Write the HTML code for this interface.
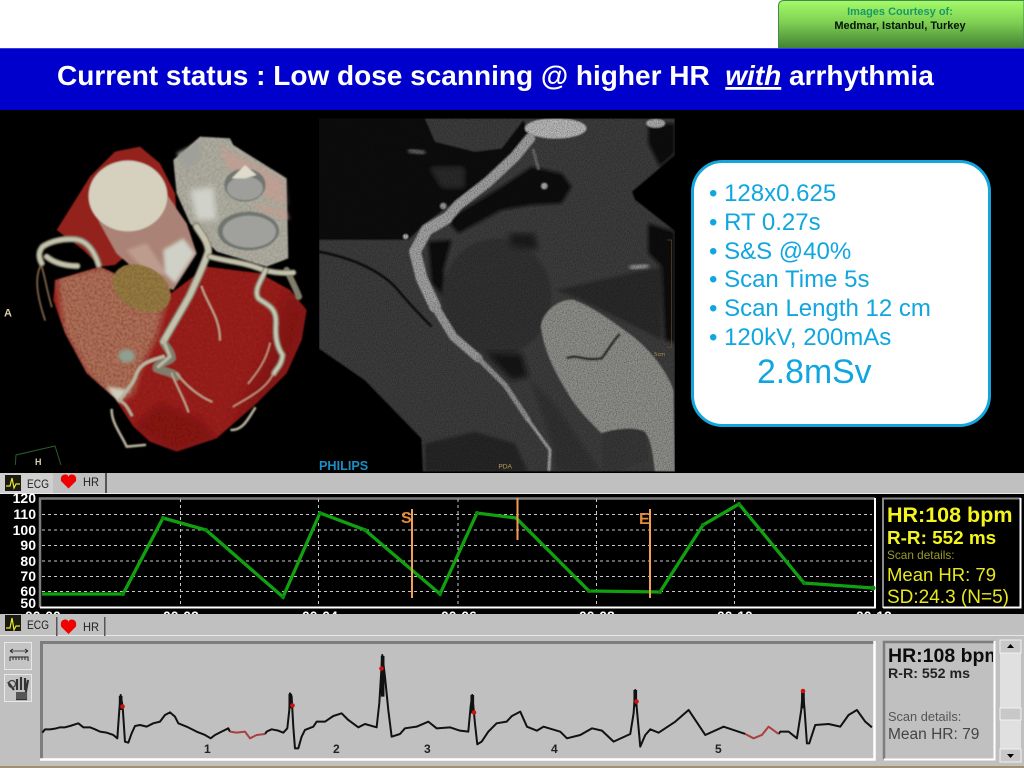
<!DOCTYPE html>
<html><head><meta charset="utf-8"><title>Low dose scanning</title>
<style>
html,body{margin:0;padding:0;background:#fff;overflow:hidden}
svg{display:block}
text{font-family:"Liberation Sans",sans-serif}
</style></head><body>
<svg width="1024" height="768" viewBox="0 0 1024 768" xmlns="http://www.w3.org/2000/svg">
<defs>
<linearGradient id="g" x1="0" y1="0" x2="0" y2="1"><stop offset="0" stop-color="#a4fb68"/><stop offset=".45" stop-color="#7fd052"/><stop offset="1" stop-color="#3f7f33"/></linearGradient>
<filter id="soft" x="-3%" y="-3%" width="106%" height="106%"><feGaussianBlur stdDeviation="2.4"/></filter>
<filter id="b1" x="-10%" y="-10%" width="120%" height="120%"><feGaussianBlur stdDeviation="5"/></filter>
<filter id="b2" x="-15%" y="-15%" width="130%" height="130%"><feGaussianBlur stdDeviation="9"/></filter>
<filter id="b3" x="-25%" y="-25%" width="150%" height="150%"><feGaussianBlur stdDeviation="18"/></filter>
<filter id="nz" x="0" y="0" width="100%" height="100%"><feTurbulence type="fractalNoise" baseFrequency=".3" numOctaves="2" seed="3"/><feColorMatrix values="0 0 0 0 0  0 0 0 0 0  0 0 0 0 0  1.5 0 0 0 -.6"/><feComposite in2="SourceGraphic" operator="in"/></filter>
<filter id="nz2" x="0" y="0" width="100%" height="100%"><feTurbulence type="fractalNoise" baseFrequency=".2" numOctaves="2" seed="8"/><feColorMatrix values="0 0 0 0 .1  0 0 0 0 0  0 0 0 0 0  2 0 0 0 -.85"/><feComposite in2="SourceGraphic" operator="in"/></filter>
<clipPath id="ctc"><rect x="12" y="25" width="1068" height="1060"/></clipPath>
<clipPath id="hp"><rect x="883" y="641" width="110" height="118"/></clipPath>
<clipPath id="hb"><path id="hbp" d="M165,510L300,470L500,560L620,470L780,490L870,540L920,600L905,690L860,790L770,880L650,985L530,1025L450,995L400,950L345,865L260,790L195,670L160,570Z"/></clipPath>
</defs>

<rect width="1024" height="768" fill="#000"/>
<rect width="1024" height="49" fill="#fff"/>
<!-- courtesy box -->
<path d="M778.5,49V6Q778.5,.5 784,.5H1024V49Z" fill="url(#g)" stroke="#3f8a4c"/>
<text x="900" y="15" font-size="11" font-weight="bold" fill="#169a68" text-anchor="middle">Images Courtesy of:</text>
<text x="900" y="29" font-size="11" font-weight="bold" fill="#04140a" text-anchor="middle">Medmar, Istanbul, Turkey</text>
<!-- title -->
<rect y="49" width="1024" height="61" fill="#0000cc"/>
<rect y="48" width="1024" height="1" fill="#3a3ae0"/>
<text x="57" y="85" font-size="28" font-weight="bold" fill="#fff" xml:space="preserve">Current status : Low dose scanning @ higher HR  <tspan font-style="italic" text-decoration="underline">with</tspan> arrhythmia</text>

<!-- 3D heart -->
<g transform="translate(0,110) scale(.3333)">
<g filter="url(#soft)">
 <path d="M170,360L270,200L345,125L420,110L480,160L525,250L530,310L345,465L300,470L250,420Z" fill="#94201a"/>
 <use href="#hbp" fill="#9c201c"/>
 <g clip-path="url(#hb)">
  <rect x="150" y="460" width="780" height="580" fill="#000" filter="url(#nz2)" opacity=".6"/>
  <path d="M170,500L310,470L500,570L470,680L420,780L400,850L350,880L260,790L190,660Z" fill="#ba8f70" filter="url(#b2)" opacity=".8"/>
  <path d="M170,500L310,470L500,570L470,680L420,780L400,850L350,880L260,790L190,660Z" fill="#6a2012" filter="url(#nz2)" opacity=".9"/>
  <path d="M320,830L390,840L350,880Z" fill="#cfcdbc" filter="url(#b1)"/>
  <path d="M860,540L930,600L900,720L800,880L700,960L820,700Z" fill="#74110f" filter="url(#b3)" opacity=".6"/>
  <path d="M400,950L520,1030L650,985L600,930L480,880Z" fill="#74110f" filter="url(#b2)" opacity=".6"/>
 </g>
 <ellipse cx="380" cy="738" rx="25" ry="20" fill="#8fa090" filter="url(#b1)"/>
 <!-- aorta body -->
 <path d="M268,265L300,340L350,430L440,510L520,540L590,430L560,340L498,250Z" fill="#ab8376"/>
 <path d="M380,420L450,500L500,490L440,400Z" fill="#bd9c8e" filter="url(#b1)"/>
 <path d="M490,420L550,385L585,430L525,520L495,490Z" fill="#cfd0c6" filter="url(#b1)"/>
 <ellipse cx="384" cy="258" rx="118" ry="106" fill="#d6d1bf"/>
 <!-- gold patch -->
 <ellipse cx="425" cy="535" rx="92" ry="66" transform="rotate(28 425 535)" fill="#a98848"/>
 <ellipse cx="425" cy="535" rx="92" ry="66" transform="rotate(28 425 535)" fill="#3a280f" filter="url(#nz)"/>
 <!-- atrium -->
 <path d="M520,150L600,80L690,85L700,105L860,205L865,445L800,470L650,425L570,340L530,250Z" fill="#bcbaac"/>
 <path d="M520,150L600,80L690,85L700,105L860,205L865,445L800,470L650,425L570,340L530,250Z" fill="#5a5a50" filter="url(#nz)" opacity=".7"/>
 <path d="M660,110L850,210L860,290L780,250L680,170Z" fill="#c89c90" filter="url(#b2)" opacity=".7"/>
 <path d="M750,280L860,300L870,330L800,310Z" fill="#c89c90" filter="url(#b1)" opacity=".6"/>
 <path d="M530,130L600,95L605,140L560,180Z" fill="#a0a09a" filter="url(#b1)"/>
 <path d="M570,240L640,230L650,330L590,330Z" fill="#d0d2ca" filter="url(#b2)"/>
 <ellipse cx="735" cy="225" rx="62" ry="50" fill="#6f7470"/>
 <ellipse cx="735" cy="235" rx="54" ry="36" fill="#9e9e9a"/>
 <path d="M695,205L735,165L770,195L735,205Z" fill="#dedbcb"/>
 <ellipse cx="745" cy="363" rx="92" ry="58" fill="#6f746e"/>
 <ellipse cx="748" cy="365" rx="80" ry="48" fill="#a0a09c"/>
 <!-- vessels -->
 <g fill="none" stroke-linecap="round" stroke-linejoin="round">
  <path d="M296,465C285,430 265,392 225,388C185,385 150,395 128,410C115,425 115,440 125,460M232,468C205,468 165,462 140,440" stroke="#807d6c" stroke-width="20"/>
  <path d="M296,465C285,430 265,392 225,388C185,385 150,395 128,410C115,425 115,440 125,460M232,468C205,468 165,462 140,440" stroke="#c4c3ac" stroke-width="11"/>
  <path d="M120,470C108,500 105,540 135,630M125,470C135,500 140,540 155,590" stroke="#8a6a50" stroke-width="5"/>
  <path d="M590,350C605,375 625,395 625,425C610,470 590,510 570,555C540,610 515,650 490,695C500,715 515,725 515,745C495,760 470,760 470,775C490,785 515,785 530,800" stroke="#807d6c" stroke-width="24"/>
  <path d="M590,350C605,375 625,395 625,425C610,470 590,510 570,555C540,610 515,650 490,695" stroke="#c4c2ac" stroke-width="16"/>
  <path d="M490,690L510,740L475,770M490,740C460,750 425,755 410,790C400,825 385,830 360,870" stroke="#b8b6a0" stroke-width="10"/>
  <path d="M515,790C530,830 550,860 565,905M530,790C560,830 600,860 635,875M605,530C620,580 660,620 660,690" stroke="#c4ab94" stroke-width="5"/>
  <path d="M630,440C680,455 730,455 790,480C830,490 860,490 880,488M860,480C875,510 885,530 897,560" stroke="#807d6c" stroke-width="19"/>
  <path d="M630,440C680,455 730,455 790,480C830,490 860,490 880,488" stroke="#c4c2ac" stroke-width="11"/>
  <path d="M797,480C785,510 760,540 775,565C800,585 830,590 828,640C825,680 830,710 848,735C845,765 830,775 822,790" stroke="#807d6c" stroke-width="18"/>
  <path d="M797,480C785,510 760,540 775,565C800,585 830,590 828,640C825,680 830,710 848,735C845,765 830,775 822,790" stroke="#c8c6b0" stroke-width="10"/>
  <path d="M820,790C800,840 730,870 700,890M810,700C800,750 770,790 745,820" stroke="#c8a088" stroke-width="4"/>
  <path d="M335,900C335,940 365,975 380,1010L435,1005M765,895C745,925 730,960 695,960M355,870C380,880 385,900 395,915" stroke="#b5af9a" stroke-width="8"/>
 </g>
</g>
 <text x="12" y="620" font-size="33" font-weight="bold" fill="#d8cfb0">A</text>
 <path d="M46,1065L48,1035L165,1008L183,1065" fill="none" stroke="#2d5a2d" stroke-width="3"/>
 <text x="105" y="1065" font-size="27" font-weight="bold" fill="#d8cfb0">H</text>
</g>

<!-- CT -->
<g transform="translate(315,110) scale(.3333)" clip-path="url(#ctc)">
 <g filter="url(#soft)">
 <rect x="12" y="25" width="1068" height="1060" fill="#3e3e3e"/>
 <path d="M12,25H330L360,95L480,125L560,115L625,30L650,90L560,170L480,230L400,290L330,340L280,390L12,390Z" fill="#0c0c0c"/>
 <path d="M560,230L650,170L740,190L770,230L740,280L650,285L560,300L430,370L395,330Z" fill="#101010" filter="url(#b1)"/>
 <path d="M340,395L410,390L385,480L395,570L350,520Z" fill="#0e0e0e" filter="url(#b1)"/>
 <path d="M340,170H450V235L380,235Z" fill="#2c2c2c" filter="url(#b2)"/>
 <path d="M12,425C90,440 180,470 240,530C290,590 320,620 350,650" stroke="#0e0e0e" stroke-width="9" fill="none"/>
 <ellipse cx="545" cy="560" rx="165" ry="175" fill="#303030" filter="url(#b1)"/>
 <path d="M580,370L660,370L670,420L590,410Z" fill="#1a1a1a" filter="url(#b2)"/>
 <path d="M510,730L620,730L640,800L590,810Z" fill="#161616" filter="url(#b2)"/>
 <path d="M720,540L940,490L1040,470L1040,690L900,620L800,570Z" fill="#292929" filter="url(#b1)"/>
 <path d="M1000,340L1080,365V700L1050,690L1040,470L1000,430Z" fill="#101010" filter="url(#b1)"/>
 <path d="M1000,40H1080V130L1035,170L1000,100Z" fill="#0b0b0b" filter="url(#b1)"/>
 <path d="M640,800L720,880L860,1085H720L710,1000Z" fill="#333" filter="url(#b2)"/>
 <!-- ventricle -->
 <path d="M678,650C680,610 730,565 775,570C830,590 880,625 940,670C990,705 1050,770 1075,840L1080,1085H1020C1015,1040 1010,990 990,965C960,950 900,955 860,970C820,930 790,900 765,860C735,810 690,740 678,650Z" fill="#8e8e8a"/>
 <path d="M860,970C900,955 960,950 990,965L1002,1050L905,1085H862Z" fill="#383838"/>
 <path d="M755,745C790,730 800,755 860,745C880,720 895,690 915,672" stroke="#2b2b2b" stroke-width="8" fill="none"/>
 <!-- black cuts -->
 <path d="M1085,130L950,245L960,270L1085,368Z" fill="#000"/>
 <path d="M5,710L150,810L320,985L325,1090H5Z" fill="#000"/>
 <path d="M330,1000L480,965L600,1000L640,1085H330Z" fill="#272727" filter="url(#b1)"/>
 <!-- aorta + vessel -->
 <ellipse cx="722" cy="55" rx="92" ry="30" fill="#b8b8b8"/>
 <ellipse cx="1022" cy="40" rx="28" ry="13" fill="#aaa"/>
 <g fill="none" stroke-linecap="round" stroke-linejoin="round">
  <path d="M645,85L600,140L520,215L430,285L395,325" stroke="#a0a0a0" stroke-width="30"/>
  <path d="M395,325L335,360L300,425L320,505L360,590" stroke="#a2a2a2" stroke-width="34"/>
  <path d="M360,590L415,680L490,745" stroke="#9c9c9c" stroke-width="24"/>
  <path d="M490,745L570,825L640,930" stroke="#909090" stroke-width="14"/>
  <path d="M640,930L705,1020L702,1080" stroke="#a0a0a0" stroke-width="8"/>
  <path d="M655,120L670,175" stroke="#6a6a6a" stroke-width="8"/>
 </g>
 <circle cx="688" cy="228" r="9" fill="#aaa"/><circle cx="272" cy="380" r="7" fill="#bbb"/><circle cx="385" cy="288" r="9" fill="#999"/>
 <path d="M280,120L330,130" stroke="#777" stroke-width="12" filter="url(#b1)"/>
 <path d="M945,475L1000,465" stroke="#999" stroke-width="16" filter="url(#b1)"/>
 </g>
 <rect x="12" y="25" width="1068" height="1060" fill="#000" filter="url(#nz)" opacity=".55"/>
 <path d="M1057,390H1070V712H1055" fill="none" stroke="#5f4f2c" stroke-width="2"/>
 <text x="1018" y="738" font-size="17" fill="#a88e50">5cm</text>
 <text x="550" y="1075" font-size="20" fill="#b99f5a">PDA</text>
 <text x="12" y="1080" font-size="38" font-weight="bold" fill="#1c8ec4">PHILIPS</text>
</g>

<!-- info callout -->
<rect x="692.5" y="161.5" width="297" height="264" rx="30" fill="#fff" stroke="#13a5dc" stroke-width="3"/>
<g font-size="24" fill="#10a6df">
<text x="709" y="201">• 128x0.625</text>
<text x="709" y="230">• RT 0.27s</text>
<text x="709" y="259">• S&amp;S @40%</text>
<text x="709" y="287">• Scan Time 5s</text>
<text x="709" y="316">• Scan Length 12 cm</text>
<text x="709" y="345">• 120kV, 200mAs</text>
<text x="757" y="383" font-size="33.8">2.8mSv</text>
</g>

<!-- time labels (clipped by grey below) -->
<g font-size="14" font-weight="bold" fill="#fff">
<text x="25" y="621">00:00</text><text x="163" y="621">00:02</text><text x="302" y="621">00:04</text><text x="441" y="621">00:06</text><text x="579" y="621">00:08</text><text x="717" y="621">00:10</text><text x="856" y="621">00:12</text>
</g>

<!-- upper HR panel -->
<rect y="473" width="1024" height="20" fill="#c0c0c0"/>
<rect y="493" width="1024" height="1" fill="#e8e8e8"/>
<rect x="0" y="473" width="53" height="20" fill="#cfcfcf"/>
<rect x="105" y="473" width="2" height="20" fill="#555"/>
<rect x="5" y="475" width="16" height="16" fill="#1a1a10"/>
<path d="M6,486H10L12,478L14,488L16,484H20" fill="none" stroke="#e8e830" stroke-width="1.2"/>
<text x="27" y="488" font-size="12" fill="#222" textLength="22" lengthAdjust="spacingAndGlyphs">ECG</text>
<path d="M68.500,488.500L61,481Q60,475 65,474.500Q68,474.500 68.500,477Q69,474.500 72,474.500Q77,475 76,481Z" fill="#f00000"/>
<text x="83" y="486" font-size="12" fill="#222" textLength="16" lengthAdjust="spacingAndGlyphs">HR</text>
<rect x="40" y="498" width="835" height="110" fill="#000"/>
<path d="M40,607.500V498.500H875" fill="none" stroke="#7d7d7d" stroke-width="2.500"/>
<path d="M40,607.500H875V498" fill="none" stroke="#fff" stroke-width="2"/>
<g stroke="#c8c8c8" stroke-width="1" stroke-dasharray="3,3" fill="none">
<path d="M42,514.500H872M42,530H872M42,545.500H872M42,561H872M42,576.500H872M42,591.500H872"/>
<path d="M180.500,499V606M318.500,499V606M458,499V606M596.500,499V606M734.500,499V606"/>
</g>
<g font-size="14" font-weight="bold" fill="#fff" text-anchor="end">
<text x="36" y="503">120</text><text x="36" y="519">110</text><text x="36" y="535">100</text><text x="36" y="550">90</text><text x="36" y="566">80</text><text x="36" y="581">70</text><text x="36" y="596">60</text><text x="36" y="608">50</text>
</g>
<path d="M42,594L123,594L163,518L206,530L283,597L320,513L365,530L440,594L477,513L516,518L589,591L660,592L703,525L739,504L804,583L873,588" fill="none" stroke="#10a010" stroke-width="3.300"/>
<g fill="#0b8a0b"><circle cx="123" cy="594" r="2"/><circle cx="163" cy="518" r="2"/><circle cx="206" cy="530" r="2"/><circle cx="283" cy="597" r="2"/><circle cx="320" cy="513" r="2"/><circle cx="365" cy="530" r="2"/><circle cx="440" cy="594" r="2"/><circle cx="477" cy="513" r="2"/><circle cx="589" cy="591" r="2"/><circle cx="660" cy="592" r="2"/><circle cx="703" cy="525" r="2"/><circle cx="739" cy="504" r="2"/><circle cx="804" cy="583" r="2"/><circle cx="873" cy="588" r="2.500"/></g>
<path d="M412,509V598M517.500,498V540M650,509V598" stroke="#f0a050" stroke-width="2"/>
<text x="401" y="523" font-size="16" font-weight="bold" fill="#e08a3a">S</text>
<text x="639" y="524" font-size="16" font-weight="bold" fill="#e08a3a">E</text>
<!-- info -->
<rect x="883" y="498" width="138" height="110" fill="#000"/>
<path d="M883,608V498.500H1021" fill="none" stroke="#8a8a8a" stroke-width="2"/>
<path d="M883,607.500H1020.500V498" fill="none" stroke="#fff" stroke-width="2"/>
<text x="887" y="522" font-size="21.500" font-weight="bold" fill="#f5f51e">HR:108 bpm</text>
<text x="887" y="544" font-size="18.900" font-weight="bold" fill="#f5f51e">R-R: 552 ms</text>
<text x="887" y="559" font-size="11.800" fill="#9a9a28">Scan details:</text>
<text x="887" y="581" font-size="18.500" fill="#e8e81e">Mean HR: 79</text>
<text x="887" y="603" font-size="19" fill="#e8e81e">SD:24.3 (N=5)</text>

<!-- lower ECG panel -->
<rect y="614" width="1024" height="154" fill="#c0c0c0"/>
<rect y="635" width="1024" height="1" fill="#e8e8e8"/>
<rect x="56" y="617" width="1.500" height="19" fill="#555"/>
<rect x="104" y="617" width="1.500" height="19" fill="#555"/>
<rect x="5" y="615" width="16" height="16" fill="#1a1a10"/>
<path d="M6,628H10L12,618L14,630L16,626H20" fill="none" stroke="#e8e830" stroke-width="1.200"/>
<text x="27" y="629" font-size="12" fill="#222" textLength="22" lengthAdjust="spacingAndGlyphs">ECG</text>
<path d="M68.500,634L61,626.500Q60,620 65,619.500Q68,619.500 68.500,622Q69,619.500 72,619.500Q77,620 76,626.500Z" fill="#f00000"/>
<text x="83" y="631" font-size="12" fill="#222" textLength="16" lengthAdjust="spacingAndGlyphs">HR</text>
<!-- tool buttons -->
<g>
<rect x="4.500" y="642.500" width="27" height="27" fill="#c4c4c4" stroke="#e8e8e8"/>
<path d="M10,651H28M10,651l3,-2M10,651l3,2M28,651l-3,-2M28,651l-3,2" stroke="#222" stroke-width=".8" fill="none"/>
<path d="M10,661V657H28V661M13,657V660M16,657V660M19,657V660M22,657V660M25,657V660" stroke="#222" stroke-width="1" fill="none"/>
<rect x="4.500" y="674.500" width="27" height="27" fill="#c4c4c4" stroke="#e8e8e8"/>
<path d="M16,699H26V691L28,680M21,690V677M17,690V679M25,690V678M14,690L8,682" stroke="#333" stroke-width="2.200" fill="none"/>
<rect x="16" y="692" width="11" height="7" fill="#555"/>
<circle cx="12" cy="684" r="3.500" fill="none" stroke="#444" stroke-width="1.200"/>
</g>
<!-- chart -->
<path d="M41.500,759V642.500H875" fill="none" stroke="#7d7d7d" stroke-width="3"/>
<path d="M40,759.500H874.500V641" fill="none" stroke="#fff" stroke-width="2.500"/>
<g transform="translate(0,610) scale(.3333)" fill="none" stroke-linejoin="round">
<path stroke="#111" stroke-width="6" d="M127,368L135,358L150,358L165,356L180,352L195,352L210,348L235,340L250,352L270,352L285,358L300,365L320,368L340,375L352,385L358,300L362,255L368,290L375,395L385,398L395,370L405,348L420,345L440,350L460,340L480,335L495,315L510,307L525,320L535,340L560,350L590,365L615,375L632,385L645,375L665,365L685,355L690,365"/>
<path stroke="#111" stroke-width="6" d="M795,372L800,365L815,358L835,362L850,368L862,355L868,300L870,250L875,260L880,350L885,415L895,415L905,380L915,360L940,350L950,335L975,335L1000,318L1025,310L1045,330L1075,352L1095,342L1130,352L1138,280L1147,135L1155,200L1165,300L1175,380L1200,372L1215,355L1250,350L1285,335L1310,355L1350,352L1380,362L1405,365L1412,290L1417,255L1425,340L1432,403L1445,395L1465,365L1490,340L1520,335L1536,318L1561,305L1581,350L1611,362L1631,350L1681,365L1701,385L1741,375L1776,355L1806,362L1841,395L1891,372L1901,310L1906,240L1911,300L1921,410L1936,375L1951,358L1976,368L2026,335L2066,300L2086,330L2116,375L2171,350L2236,372"/>
<path stroke="#111" stroke-width="6" d="M2336,372L2341,365L2366,365L2391,385L2404,300L2409,240L2414,300L2421,400L2428,400L2446,345L2486,342L2521,350L2546,315L2571,300L2596,335L2616,352"/>
<path stroke="#a84040" stroke-width="6" d="M690,365L710,368L735,365L750,385L770,375L795,372"/>
<path stroke="#a84040" stroke-width="6" d="M2236,372L2261,385L2286,375L2306,350L2336,372"/>
<path stroke="#111" stroke-width="11" d="M362,258V300M871,252V295M1148,138V260M1417,255V310M1906,240V290M2409,245V295"/>
</g>
<g fill="#d01010"><circle cx="122.500" cy="706.500" r="2.300"/><circle cx="292.500" cy="705.500" r="2.300"/><circle cx="381.500" cy="668.500" r="2.300"/><circle cx="474" cy="712.500" r="2.300"/><circle cx="636.500" cy="701.500" r="2.300"/><circle cx="803" cy="691" r="2.300"/></g>
<g font-size="12" font-weight="bold" fill="#222">
<text x="204" y="753">1</text><text x="333" y="753">2</text><text x="424" y="753">3</text>
<text x="551" y="753" font-family="Liberation Serif">4</text><text x="715" y="753" font-family="Liberation Serif">5</text>
</g>
<!-- lower info -->
<path d="M884,759V642H994" fill="none" stroke="#7d7d7d" stroke-width="2.500"/>
<path d="M884,759.500H994.500V641" fill="none" stroke="#fff" stroke-width="2"/>
<g clip-path="url(#hp)">
<text x="888" y="662" font-size="19.500" font-weight="bold" fill="#0c0c0c">HR:108 bpm</text>
<text x="888" y="678" font-size="14.200" font-weight="bold" fill="#222">R-R: 552 ms</text>
<text x="888" y="721" font-size="12.800" fill="#555">Scan details:</text>
<text x="888" y="739" font-size="15.500" fill="#444">Mean HR: 79</text>
</g>
<!-- scrollbar -->
<rect x="1000" y="640" width="21" height="122" fill="#e0e0e0"/>
<rect x="1000" y="640" width="21" height="13" fill="#c8c8c8" stroke="#efefef"/>
<path d="M1010.500,644L1014,648H1007Z" fill="#000"/>
<rect x="1000" y="708" width="21" height="12" fill="#c8c8c8" stroke="#f0f0f0"/>
<rect x="1000" y="749" width="21" height="13" fill="#c8c8c8" stroke="#efefef"/>
<path d="M1010.500,758L1014,754H1007Z" fill="#000"/>
<rect y="766" width="1024" height="2" fill="#a09070"/>
</svg>
</body></html>
